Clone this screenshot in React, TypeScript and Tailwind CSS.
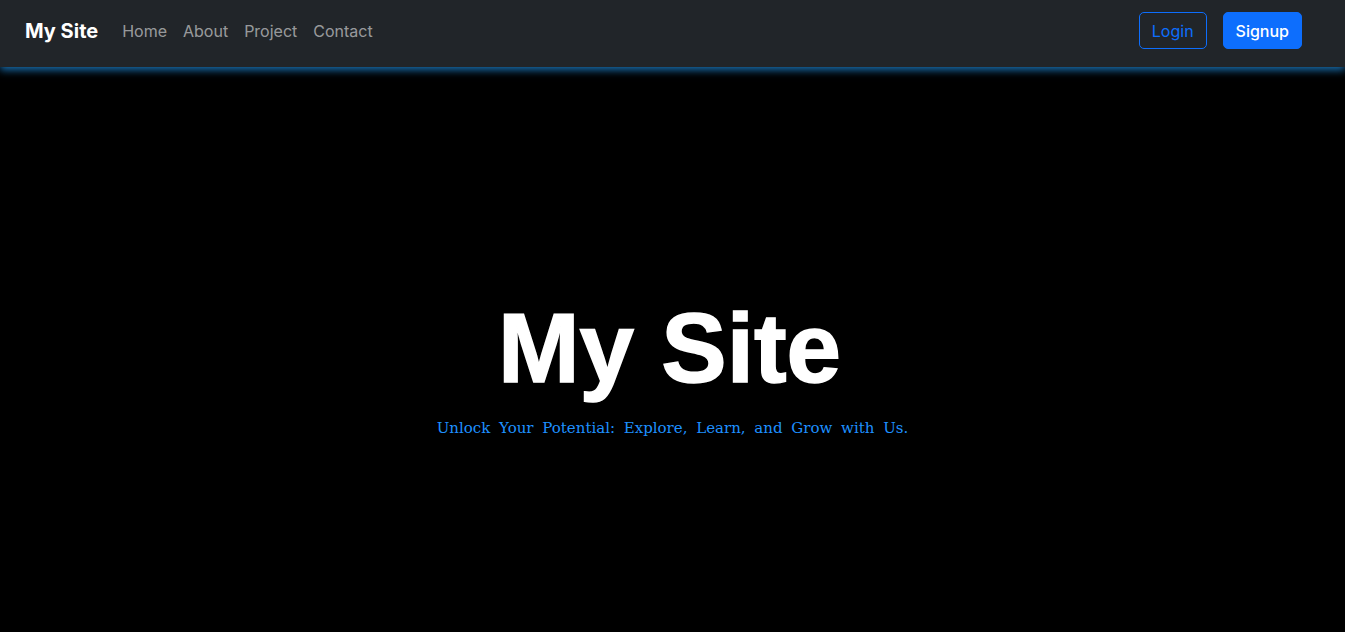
const links = ["Home", "About", "Project", "Contact"];

const Navbar = () => {
  return (
    <nav className="relative z-10 flex h-[67px] items-center bg-[#212529] pb-[6px] pl-[25px] pr-[43px] shadow-[0_3px_8px_rgba(35,150,235,0.75)]">
      <a href="#" className="mr-[16px] text-[20px] font-bold text-white">
        My Site
      </a>
      <ul className="flex items-center">
        {links.map((l) => (
          <li key={l}>
            <a href="#" className="block px-[8px] py-[8px] text-[16px] text-[rgba(255,255,255,0.55)]">
              {l}
            </a>
          </li>
        ))}
      </ul>
      <div className="ml-auto flex items-center gap-[16px]">
        <button className="h-[37px] rounded-[5px] border border-[#0d6efd] px-[12px] text-[16px] text-[#0d6efd]">
          Login
        </button>
        <button className="h-[37px] rounded-[5px] border border-[#0d6efd] bg-[#0d6efd] px-[12px] text-[16px] font-medium text-white">
          Signup
        </button>
      </div>
    </nav>
  );
};

export default function App() {
  return (
    <div className="min-h-[632px] bg-black font-['Inter',sans-serif]">
      <Navbar />
      <section className="flex h-[565px] flex-col items-center pt-[223px]">
        <h1 className="pr-[6px] font-['Liberation_Sans',Arial,sans-serif] text-[98px] font-bold leading-[1.2] text-white [-webkit-text-stroke:1.5px_white]">
          My Site
        </h1>
        <p className="mt-[9px] font-['DejaVu_Serif',serif] text-[15px] text-[#1e90ff] [word-spacing:4px]">
          Unlock Your Potential: Explore, Learn, and Grow with Us.
        </p>
      </section>
    </div>
  );
}
